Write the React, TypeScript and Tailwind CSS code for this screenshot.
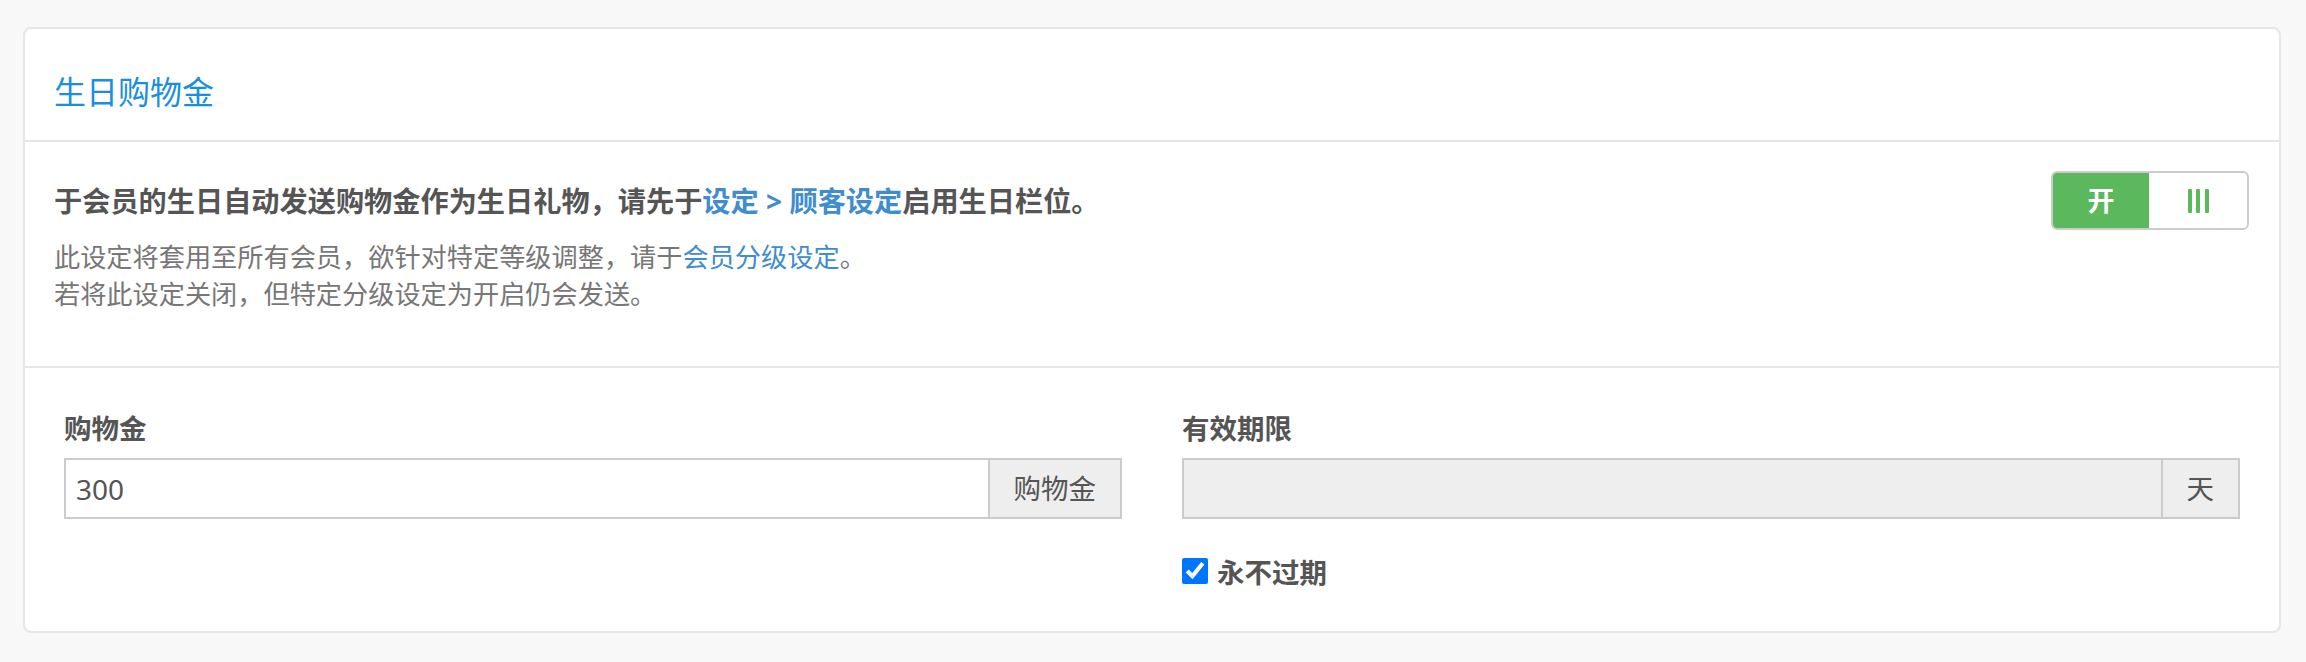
import React, { useState } from "react";

const font = {
  fontFamily: '"Noto Sans", "Noto Sans CJK SC", sans-serif',
};

const Toggle: React.FC = () => {
  const [on, setOn] = useState<boolean>(true);
  return (
    <button
      onClick={() => setOn(!on)}
      className="flex h-[59px] w-[198px] shrink-0 overflow-hidden rounded-[6px] border-2 border-[#cccccc] bg-white"
    >
      <div
        className={
          "flex w-[96px] items-center justify-center text-[27px] font-bold leading-none" +
          (on ? " bg-[#5cb85c] text-white" : " bg-white text-[#5cb85c]")
        }
      >
        开
      </div>
      <div className="flex flex-1 items-center justify-center gap-[4.5px]">
        <div className="h-[24px] w-[4px] rounded-[1px] bg-[#5cb85c]" />
        <div className="h-[24px] w-[4px] rounded-[1px] bg-[#5cb85c]" />
        <div className="h-[24px] w-[4px] rounded-[1px] bg-[#5cb85c]" />
      </div>
    </button>
  );
};

const App: React.FC = () => {
  const [amount, setAmount] = useState<string>("300");
  const [never, setNever] = useState<boolean>(true);

  return (
    <div
      style={font}
      className="min-h-[662px] bg-[#f8f8f8] pl-[23px] pr-[25px] pt-[27px]"
    >
      <div className="rounded-[8px] border-2 border-[#e6e6e6] bg-white">
        {/* Header */}
        <div className="border-b-2 border-[#e6e6e6] px-[29px] pb-[31px] pt-[45px]">
          <h2 className="text-[32px] font-normal leading-[35px] text-[#1a8fdd]">
            生日购物金
          </h2>
        </div>

        {/* Description + toggle */}
        <div className="flex items-start justify-between border-b-2 border-[#e6e6e6] pb-[53px] pl-[29px] pr-[30px] pt-[29px]">
          <div className="pt-[12px]">
            <p className="text-[28.2px] font-bold leading-[37px] text-[#555555]">
              于会员的生日自动发送购物金作为生日礼物，请先于
              <a className="text-[#3f8ccf]">设定 &gt; 顾客设定</a>
              启用生日栏位。
            </p>
            <p className="mt-[19px] text-[26.2px] leading-[37px] text-[#777777]">
              此设定将套用至所有会员，欲针对特定等级调整，请于
              <a className="text-[#3f8ccf]">会员分级设定</a>。
              <br />
              若将此设定关闭，但特定分级设定为开启仍会发送。
            </p>
          </div>
          <Toggle />
        </div>

        {/* Fields */}
        <div className="grid grid-cols-2 gap-x-[60px] px-[39px] pb-[40px] pt-[42px]">
          <div className="flex flex-col">
            <label className="text-[27.5px] font-bold leading-[37px] text-[#555555]">
              购物金
            </label>
            <div className="mt-[11px] flex h-[61px] border-2 border-[#cccccc]">
              <input
                value={amount}
                onChange={(e) => setAmount(e.target.value)}
                style={font}
                className="min-w-0 flex-1 bg-white pl-[10px] text-[28px] text-[#555555] outline-none"
              />
              <div className="flex items-center border-l-2 border-[#cccccc] bg-[#eeeeee] px-[24px] text-[27.5px] text-[#555555]">
                购物金
              </div>
            </div>
          </div>

          <div className="flex flex-col">
            <label className="text-[27.5px] font-bold leading-[37px] text-[#555555]">
              有效期限
            </label>
            <div className="mt-[11px] flex h-[61px] border-2 border-[#cccccc]">
              <input
                disabled
                style={font}
                className="min-w-0 flex-1 bg-[#eeeeee] pl-[10px] text-[28px] text-[#555555] outline-none"
              />
              <div className="flex items-center border-l-2 border-[#cccccc] bg-[#eeeeee] px-[24px] text-[27.5px] text-[#555555]">
                天
              </div>
            </div>
            <label className="mt-[35px] flex h-[37px] items-center gap-[9px]">
              <input
                type="checkbox"
                checked={never}
                onChange={() => setNever(!never)}
                className="m-0 mb-[3px] h-[26px] w-[26px] accent-[#0075ff]"
              />
              <span className="text-[27.5px] font-bold leading-[37px] text-[#555555]">
                永不过期
              </span>
            </label>
          </div>
        </div>
      </div>
    </div>
  );
};

export default App;
